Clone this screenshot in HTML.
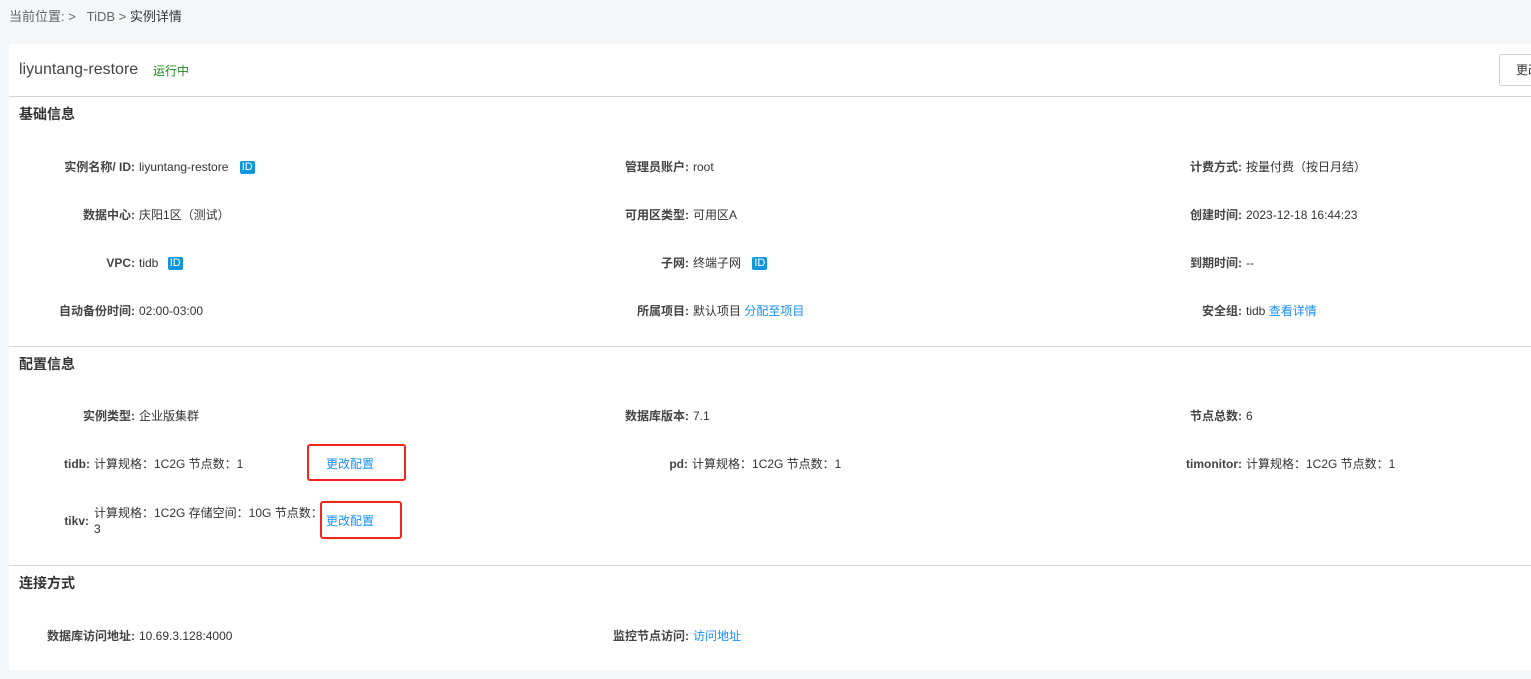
<!DOCTYPE html>
<html><head><meta charset="utf-8"><style>
body{margin:0;width:1531px;height:679px;background:#f5f6f8;font-family:"Liberation Sans","Noto Sans CJK SC",sans-serif;color:#333;overflow:hidden;position:relative;font-size:12px}
.a{position:absolute;line-height:16px;white-space:nowrap}
.l{position:absolute;line-height:16px;white-space:nowrap;text-align:right;width:200px;font-weight:bold;color:#444}
.panel{position:absolute;left:9px;top:44px;width:1530px;height:626px;background:#fff}
.hr{position:absolute;left:9px;width:1522px;height:1px;background:#d4d4d4}
.h{position:absolute;left:19px;font-size:14px;font-weight:bold;color:#333;line-height:20px}
.id{display:inline-block;background:#1296db;color:#fff;font-size:11px;line-height:13px;padding:0 2px;border-radius:2px;margin-left:8px;vertical-align:1px}
.lk{color:#1890ff}
.box{position:absolute;border:2px solid #f2271c;border-radius:3px}
</style></head><body>
<div class="a" style="left:9px;top:9px;font-size:13px;color:#666">当前位置: &gt;&nbsp;&nbsp; TiDB &gt; <span style="color:#333">实例详情</span></div>
<div class="panel"></div>
<div class="a" style="left:19px;top:60px;font-size:16px;line-height:20px;color:#444">liyuntang-restore</div>
<div class="a" style="left:153px;top:63px;color:#1a8a1a">运行中</div>
<div style="position:absolute;left:1499px;top:54px;width:40px;height:30px;border:1px solid #ccc;border-radius:3px;background:#fff"></div>
<div class="a" style="left:1516px;top:62px;color:#333">更改</div>
<div class="hr" style="top:96px"></div>
<div class="h" style="top:104px">基础信息</div>

<div class="l" style="left:-65px;top:159px">实例名称/ ID:</div><div class="a" style="left:139px;top:159px">liyuntang-restore <span class="id">ID</span></div>
<div class="l" style="left:489px;top:159px">管理员账户:</div><div class="a" style="left:693px;top:159px">root</div>
<div class="l" style="left:1042px;top:159px">计费方式:</div><div class="a" style="left:1246px;top:159px">按量付费（按日月结）</div>

<div class="l" style="left:-65px;top:207px">数据中心:</div><div class="a" style="left:139px;top:207px">庆阳1区（测试）</div>
<div class="l" style="left:489px;top:207px">可用区类型:</div><div class="a" style="left:693px;top:207px">可用区A</div>
<div class="l" style="left:1042px;top:207px">创建时间:</div><div class="a" style="left:1246px;top:207px">2023-12-18 16:44:23</div>

<div class="l" style="left:-65px;top:255px">VPC:</div><div class="a" style="left:139px;top:255px">tidb <span class="id" style="margin-left:6px">ID</span></div>
<div class="l" style="left:489px;top:255px">子网:</div><div class="a" style="left:693px;top:255px">终端子网 <span class="id">ID</span></div>
<div class="l" style="left:1042px;top:255px">到期时间:</div><div class="a" style="left:1246px;top:255px">--</div>

<div class="l" style="left:-65px;top:303px">自动备份时间:</div><div class="a" style="left:139px;top:303px">02:00-03:00</div>
<div class="l" style="left:489px;top:303px">所属项目:</div><div class="a" style="left:693px;top:303px">默认项目 <span class="lk">分配至项目</span></div>
<div class="l" style="left:1042px;top:303px">安全组:</div><div class="a" style="left:1246px;top:303px">tidb <span class="lk">查看详情</span></div>

<div class="hr" style="top:346px"></div>
<div class="h" style="top:354px">配置信息</div>
<div class="l" style="left:-65px;top:408px">实例类型:</div><div class="a" style="left:139px;top:408px">企业版集群</div>
<div class="l" style="left:489px;top:408px">数据库版本:</div><div class="a" style="left:693px;top:408px">7.1</div>
<div class="l" style="left:1042px;top:408px">节点总数:</div><div class="a" style="left:1246px;top:408px">6</div>

<div class="l" style="left:-110px;top:456px">tidb:</div><div class="a" style="left:94px;top:456px">计算规格：1C2G 节点数：1</div>
<div class="box" style="left:307px;top:444px;width:95px;height:33px"></div><div class="a lk" style="left:326px;top:456px">更改配置</div>
<div class="l" style="left:488px;top:456px">pd:</div><div class="a" style="left:692px;top:456px">计算规格：1C2G 节点数：1</div>
<div class="l" style="left:1042px;top:456px">timonitor:</div><div class="a" style="left:1246px;top:456px">计算规格：1C2G 节点数：1</div>

<div class="l" style="left:-111px;top:513px">tikv:</div><div class="a" style="left:94px;top:505px">计算规格：1C2G 存储空间：10G 节点数：<br>3</div>
<div class="box" style="left:320px;top:501px;width:78px;height:34px"></div><div class="a lk" style="left:326px;top:513px">更改配置</div>

<div class="hr" style="top:565px"></div>
<div class="h" style="top:573px">连接方式</div>
<div class="l" style="left:-65px;top:628px">数据库访问地址:</div><div class="a" style="left:139px;top:628px">10.69.3.128:4000</div>
<div class="l" style="left:489px;top:628px">监控节点访问:</div><div class="a lk" style="left:693px;top:628px">访问地址</div>
</body></html>
